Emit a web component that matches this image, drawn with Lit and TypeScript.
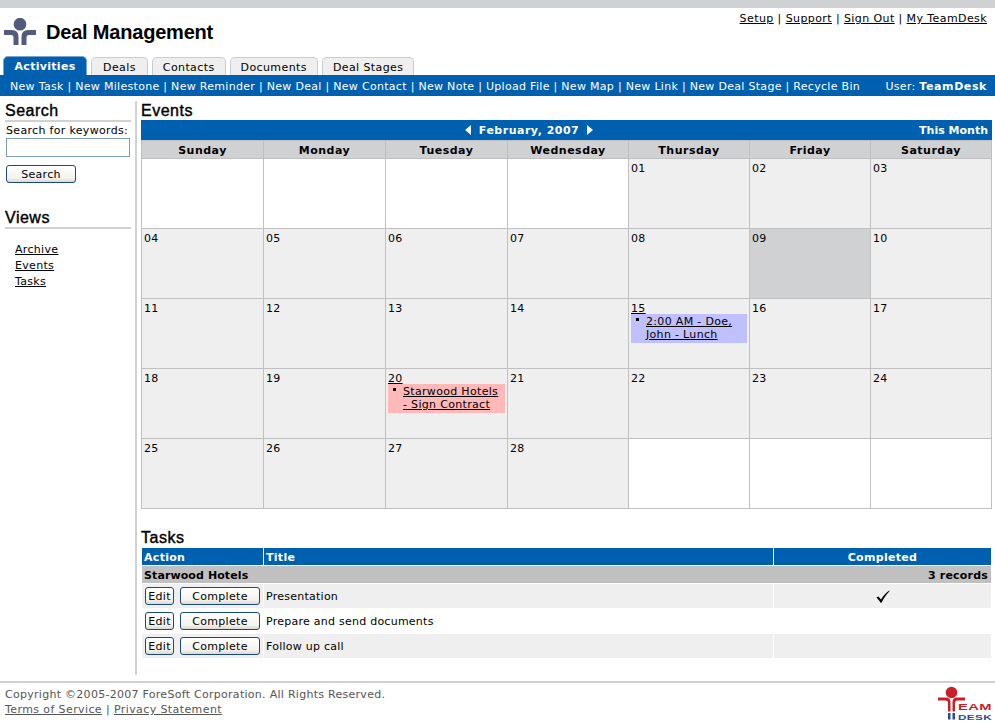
import { LitElement, html, css, svg } from "lit";
import { customElement } from "lit/decorators.js";

const nav = ["New Task","New Milestone","New Reminder","New Deal","New Contact","New Note","Upload File","New Map","New Link","New Deal Stage","Recycle Bin"];
const tabs = ["Deals","Contacts","Documents","Deal Stages"];
const days = ["Sunday","Monday","Tuesday","Wednesday","Thursday","Friday","Saturday"];
const tasks = [["Presentation",true],["Prepare and send documents",false],["Follow up call",false]] as const;

const logoPerson = svg`<svg class="logo" viewBox="0 0 32 27" width="32" height="27">
<circle cx="16" cy="6.200" r="6.300" fill="#525b7b"/>
<path d="M0 12h8q6.500 0 6.500 7v8h-5v-7.500q0-2.500-2.500-2.500H0zM32 12h-8q-6.500 0-6.500 7v8h5v-7.500q0-2.500 2.500-2.500H32z" fill="#525b7b"/></svg>`;

@customElement("app-root")
export class AppRoot extends LitElement {
  static styles = css`
    :host { display:block; width:995px; height:723px; overflow:hidden; background:#fff; color:#000;
      font:11px/13px "DejaVu Sans",Verdana,sans-serif; letter-spacing:.32px; }
    a { color:inherit; text-decoration:underline; }
    b { letter-spacing:.6px; }
    .top { height:8px; background:#d0d1d3; }
    .header { height:48px; display:flex; justify-content:space-between; padding:0 8px 0 4px; }
    .brand { display:flex; align-items:flex-start; gap:10px; padding-top:10px; }
    .logo { display:block; }
    .brand h1 { margin:2px 0 0; font:bold 20px/24px "Liberation Sans",Arial,sans-serif; letter-spacing:-.2px; }
    .links { padding-top:4px; letter-spacing:.41px; }
    .tabs { height:19px; display:flex; gap:4px; padding-left:3px; align-items:flex-end; }
    .tab { height:17px; line-height:20px; padding:0 10px; background:#efefef; border:1px solid #c5ced8; border-bottom:0; border-radius:5px 5px 0 0; letter-spacing:.4px; }
    .tab.on { height:18px; padding:0 10.500px; background:#0060b0; border-color:#7ba3cf; color:#fff; font-weight:bold; line-height:20px; letter-spacing:.3px; }
    .tab:nth-child(2) { padding:0 11px; }
    .nav { height:21px; background:#0060b0; color:#fff; display:flex; justify-content:space-between; align-items:center; padding:1px 8px 0 10px; box-sizing:border-box; letter-spacing:.3px; }
    .body { display:flex; height:585px; padding-top:5px; box-sizing:border-box; }
    .side { width:126px; margin-left:5px; padding-right:4px; flex:none; }
    h2 { margin:0; height:18px; font:16px/20px "Liberation Sans",Arial,sans-serif; -webkit-text-stroke:.4px #000; letter-spacing:.5px; }
    .side h2 { border-bottom:2px solid #d0d1d3; height:19px; }
    .kw { margin-top:2px; padding-left:1px; white-space:nowrap; }
    input { display:block; box-sizing:border-box; width:124px; height:19px; margin:1px 0 0 1px; border:1px solid #7f9db9; background:#fff; padding:0; }
    button { font:inherit; letter-spacing:.32px; color:#000; height:18px; padding:0; border:1px solid #1c4a7c; border-radius:3px; background:linear-gradient(#fff,#f4f3ee 75%,#dcd8ce); display:block; }
    .go { width:70px; margin:8px 0 0 1px; }
    .views { margin-top:25px; }
    .views ul { list-style:none; margin:13px 0 0; padding:0 0 0 10px; }
    .views li { height:16px; line-height:16px; }
    .rule { width:2px; background:#d0d1d3; flex:none; margin-right:4px; height:574px; }
    .main { width:851px; flex:none; }
    .calbar { height:20px; margin-top:1px; background:#0060b0; color:#fff; font-weight:bold; display:flex; align-items:center; padding:0 4px; letter-spacing:0; }
    .mon { flex:1; display:flex; justify-content:center; align-items:center; gap:8px; letter-spacing:.5px; padding-right:6px; }
    .arrow { width:0; height:0; border-top:5px solid transparent; border-bottom:5px solid transparent; }
    .arrow.l { border-right:6px solid #fff; }
    .arrow.r { border-left:6px solid #fff; }
    .cal { display:grid; grid-template-columns:122px 122px 122px 121px 121px 121px 121px; border-right:1px solid #c0c0c0; border-bottom:1px solid #c0c0c0; }
    .dh { height:19px; box-sizing:border-box; background:#d0d1d3; font-weight:bold; text-align:center; line-height:19px; border-left:1px solid #c0c0c0; border-top:1px solid #c0c0c0; margin-bottom:-1px; letter-spacing:.5px; }
    .c { height:70px; box-sizing:border-box; border-left:1px solid #c0c0c0; border-top:1px solid #c0c0c0; background:#efefef; padding:3px 2px 0; }
    .c.blank { background:#fff; }
    .c.today { background:#d0d1d3; }
    .ev { padding:1px 4px 0 15px; height:29px; box-sizing:border-box; position:relative; line-height:13px; }
    .ev::before { content:""; position:absolute; left:5px; top:4px; width:3px; height:3px; background:#000; }
    .ev.b { background:#c0c0ff; }
    .ev.r { background:#ffb9b9; }
    .num { display:block; height:12px; }
    .tasks { margin-top:19px; }
    .tasks h2 { height:20px; }
    .tg { display:grid; grid-template-columns:122px 510px 218px; width:851px; }
    .th { background:#0060b0; color:#fff; font-weight:bold; height:17px; line-height:19px; padding-left:2px; box-sizing:border-box; border-left:1px solid #fff; letter-spacing:.3px; }
    .th.ctr { text-align:center; padding:0; }
    .grp { grid-column:1/-1; display:flex; justify-content:space-between; background:#c0c0c0; font-weight:bold; height:17px; line-height:19px; padding:0 3px 0 2px; margin:1px 0 1px 1px; letter-spacing:.1px; }
    .grp span:last-child { letter-spacing:.2px; }
    .td { height:24px; margin-bottom:1px; box-sizing:border-box; display:flex; align-items:center; border-left:1px solid #fff; padding-left:2px; letter-spacing:.25px; }
    .alt { background:#efefef; }
    .act { gap:6px; padding-left:3px; }
    .act .e { width:29px; }
    .act .d { width:80px; }
    .tick { justify-content:center; padding:0; }
    .tickmark { display:block; }
    .foot { border-top:2px solid #d0d1d3; height:41px; box-sizing:border-box; display:flex; justify-content:space-between; color:#555; padding:4px 3px 0 5px; line-height:15px; letter-spacing:.28px; }
    .legal { letter-spacing:.4px; }
    .tdlogo { display:block; margin-top:-1px; }
  `;

  private cell(n: number) {
    const s = String(n).padStart(2, "0");
    if (n === 15) return html`<div class="c"><a class="num" href="#">15</a><div class="ev b"><a href="#">2:00 AM - Doe, John - Lunch</a></div></div>`;
    if (n === 20) return html`<div class="c"><a class="num" href="#">20</a><div class="ev r"><a href="#">Starwood Hotels - Sign Contract</a></div></div>`;
    return html`<div class="c ${n === 9 ? "today" : ""}">${s}</div>`;
  }

  render() {
    const cells = [];
    for (let i = 0; i < 4; i++) cells.push(html`<div class="c blank"></div>`);
    for (let n = 1; n <= 28; n++) cells.push(this.cell(n));
    for (let i = 0; i < 3; i++) cells.push(html`<div class="c blank"></div>`);
    return html`
      <div class="top"></div>
      <div class="header">
        <div class="brand">${logoPerson}<h1>Deal Management</h1></div>
        <div class="links"><a href="#">Setup</a> | <a href="#">Support</a> | <a href="#">Sign Out</a> | <a href="#">My TeamDesk</a></div>
      </div>
      <div class="tabs"><div class="tab on">Activities</div>${tabs.map(t => html`<div class="tab">${t}</div>`)}</div>
      <div class="nav"><div>${nav.join(" | ")}</div><div>User: <b>TeamDesk</b></div></div>
      <div class="body">
        <div class="side">
          <h2>Search</h2>
          <div class="kw">Search for keywords:</div>
          <input />
          <button class="go">Search</button>
          <div class="views">
            <h2>Views</h2>
            <ul><li><a href="#">Archive</a></li><li><a href="#">Events</a></li><li><a href="#">Tasks</a></li></ul>
          </div>
        </div>
        <div class="rule"></div>
        <div class="main">
          <h2>Events</h2>
          <div class="calbar"><div class="mon"><i class="arrow l"></i>February, 2007<i class="arrow r"></i></div><div>This Month</div></div>
          <div class="cal">${days.map(d => html`<div class="dh">${d}</div>`)}${cells}</div>
          <div class="tasks">
            <h2>Tasks</h2>
            <div class="tg">
              <div class="th">Action</div><div class="th">Title</div><div class="th ctr">Completed</div>
              <div class="grp"><span>Starwood Hotels</span><span>3 records</span></div>
              ${tasks.map(([t, done], i) => {
                const alt = i % 2 === 0 ? "alt" : "";
                return html`
                  <div class="td act ${alt}"><button class="e">Edit</button><button class="d">Complete</button></div>
                  <div class="td ${alt}">${t}</div>
                  <div class="td tick ${alt}">${done ? svg`<svg class="tickmark" width="14" height="13" viewBox="0 0 14 13"><path d="M0.500 7.500L2.500 6.500L5 9.500C7 6 10 2.500 13.500 0.500L13.700 1C10.500 4 8 8 5.500 12.800H4.500C3.500 10.800 2 9 .5 7.500z" fill="#000"/></svg>` : ""}</div>`;
              })}
            </div>
          </div>
        </div>
      </div>
      <div class="foot">
        <div>Copyright ©2005-2007 ForeSoft Corporation. All Rights Reserved.<br /><span class="legal"><a href="#">Terms of Service</a> | <a href="#">Privacy Statement</a></span></div>
        <svg class="tdlogo" width="54" height="34" viewBox="0 0 54 34">
          <circle cx="13.500" cy="6.500" r="5.800" fill="#c8202a"/>
          <path d="M0 11.500h8q4.500 0 4.500 4.500v9.500h-2.500V17q0-2.500-2.500-2.500H0zM27 11.500h-8q-4.500 0-4.500 4.500v9.500h2.500V17q0-2.500 2.500-2.500H27z" fill="#c8202a"/>
          <rect x="10" y="27" width="2.500" height="6.500" fill="#2c4a9a"/><rect x="14.500" y="27" width="2.500" height="6.500" fill="#2c4a9a"/>
          <text x="20" y="24" font-family="Liberation Sans" font-weight="bold" font-size="9" fill="#c8202a" textLength="34" lengthAdjust="spacingAndGlyphs">EAM</text>
          <text x="20" y="33.500" font-family="Liberation Sans" font-weight="bold" font-size="8" fill="#2c4a9a" textLength="34" lengthAdjust="spacingAndGlyphs">DESK</text>
        </svg>
      </div>
    `;
  }
}
